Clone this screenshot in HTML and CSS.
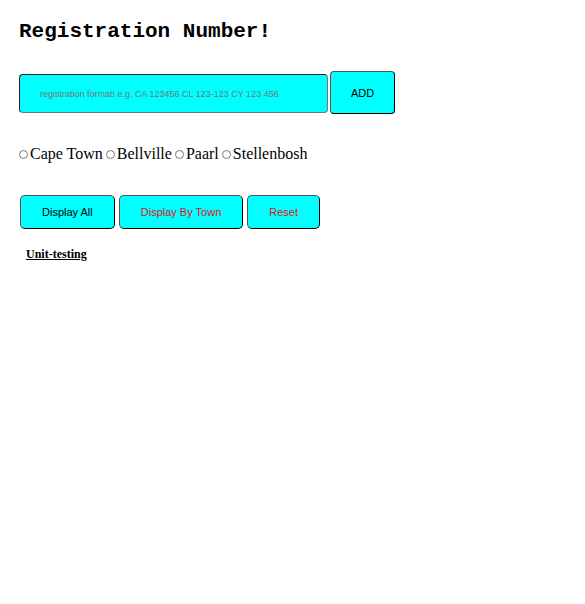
FILE: index.html
```html
<!DOCTYPE html>
<html lang="en">
<head>
<meta charset="utf-8">
<title>Registration Number!</title>
<link rel="stylesheet" href="styles.css">
</head>
<body>
<main class="page">
  <h1 class="title">Registration Number!</h1>
  <div class="entry">
    <input class="reg-input" type="text" aria-label="Registration number" placeholder="registration format! e.g. CA 123456 CL 123-123 CY 123 456">
    <button class="button button-add" type="button">ADD</button>
  </div>
  <div class="towns">
    <label class="town"><input class="radio" type="radio" name="town" value="CA">Cape Town</label>
    <label class="town"><input class="radio" type="radio" name="town" value="CY">Bellville</label>
    <label class="town"><input class="radio" type="radio" name="town" value="CJ">Paarl</label>
    <label class="town"><input class="radio" type="radio" name="town" value="CL">Stellenbosh</label>
  </div>
  <div class="actions">
    <button class="button" type="button">Display All</button>
    <button class="button button-alert" type="button">Display By Town</button>
    <button class="button button-alert" type="button">Reset</button>
  </div>
  <a class="tests" href="#">Unit-testing</a>
</main>
</body>
</html>
```
FILE: styles.css
```css
body {
  margin: 0;
  background: #fff;
  color: #000;
  font-family: "Liberation Serif", serif;
  font-size: 16px;
}

.page {
  padding: 19px;
}

.title {
  margin: 0 0 27px;
  font-family: "Liberation Mono", monospace;
  font-size: 21px;
  line-height: 25px;
}

.entry {
  display: flex;
  align-items: baseline;
  gap: 2px;
}

.reg-input,
.button {
  box-sizing: border-box;
  border: 1px solid #000;
  border-radius: 5px;
  background: aqua;
  font-family: "Liberation Sans", sans-serif;
}

.reg-input {
  width: 309px;
  height: 39px;
  padding: 0 20px;
  border: 1px inset #767676;
  border-radius: 4px;
  font-size: 9px;
}

.reg-input::placeholder {
  color: #757575;
}

.button {
  height: 34px;
  padding: 0 21px;
  border: 1px outset #000;
  color: #000;
  font-size: 11px;
}

.button-add {
  height: 43px;
  padding: 0 20px;
  border-radius: 4px;
}

.button-alert {
  color: #e01020;
}

.towns {
  display: flex;
  flex-wrap: wrap;
  gap: 3px;
  margin-top: 30px;
  line-height: 20px;
}

.town {
  display: flex;
  align-items: center;
  gap: 2px;
}

.radio {
  width: 9px;
  height: 9px;
  margin: 0;
}

.actions {
  display: flex;
  flex-wrap: wrap;
  gap: 4px;
  margin: 31px 0 15px 1px;
}

.tests {
  margin-left: 7px;
  color: #000;
  font-size: 12px;
  font-weight: bold;
}
```
